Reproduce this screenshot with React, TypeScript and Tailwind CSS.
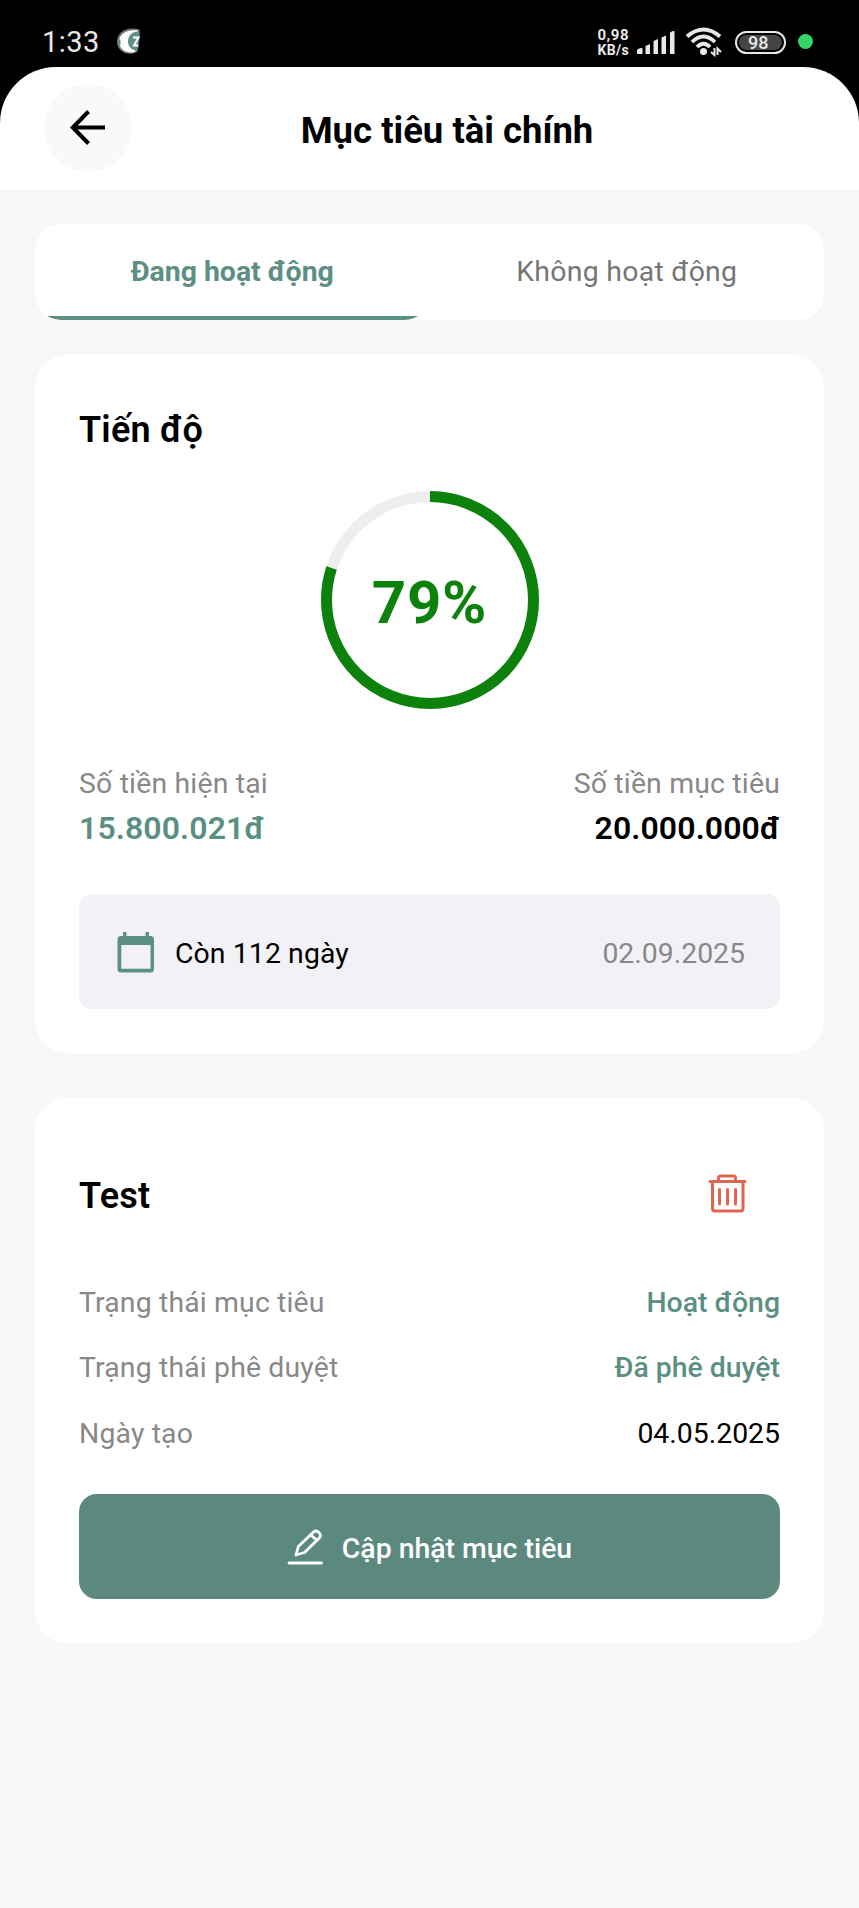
import type { ReactNode } from 'react';

function StatusBar() {
  return (
    <div className="flex h-[67px] items-center justify-between bg-black pt-[17px] pr-[46px] pl-[42px] text-[#e8e8e8]">
      <div className="flex items-center gap-[17px]">
        <span className="text-[29px] leading-[30px] tracking-[0.500px]">1:33</span>
        <svg className="-mt-[2px]" width="23" height="26" viewBox="0 0 23 26">
          <path d="M22.500 1.500C10 -2 0 4 0 13.500C0 23 10 29 20 24C22.500 19 22.500 7 22.500 1.500Z" fill="#77777a" />
          <path d="M21 2.500C10 1 2 6 2 13.500C2 21 9 26 18 24Z" fill="#fff" />
          <path d="M22.500 3.500C15 3 11 8 11 13.500C11 19 15 22.500 20 22C22.500 17 22.500 8 22.500 3.500Z" fill="#5f8e86" />
          <path d="M16 9.500H21.500L17 17.500H21" fill="none" stroke="#fff" strokeWidth="2" />
          <path d="M1 11L3.500 12V17L1.500 18Z" fill="#5f8e86" />
        </svg>
      </div>
      <div className="flex items-center">
        <div className="mr-[7px] flex flex-col pt-[2px] text-[15px] leading-[15px] font-bold">
          <span className="tracking-[0.500px]">0,98</span>
          <span className="text-[14px] tracking-[0.300px]">KB/s</span>
        </div>
        <svg width="40" height="26" viewBox="0 0 40 26" fill="#e8e8e8">
          <path d="M1 21Q1 20 5 19Q6.500 18.500 6.500 20V25H2Q1 25 1 24Z" />
          <path d="M9.500 17L14 15V25H9.500Z" />
          <path d="M17.500 12L22 10V25H17.500Z" />
          <path d="M25.500 8.500L30 6.500V25H25.500Z" />
          <path d="M34 4Q34 3 37 2Q38.500 1.500 38.500 3V25H34Z" />
        </svg>
        <svg className="ml-[9px]" width="38" height="30" viewBox="0 0 38 30" fill="none" stroke="#e8e8e8">
          <path d="M2 9.500Q18.500 -4.500 35 9.500" strokeWidth="4" />
          <path d="M7 15Q18.500 4 30 15" strokeWidth="3.800" />
          <path d="M12 20Q18.500 13.500 25 20" strokeWidth="3.800" />
          <circle cx="18.500" cy="24.500" r="3.500" fill="#e8e8e8" stroke="none" />
          <path d="M29.500 21V28L26 25M32.500 28V21.500L36 25" strokeWidth="2" />
        </svg>
        <div className="ml-[12px] flex h-[23px] w-[51px] items-center rounded-full border-2 border-[#e8e8e8] p-[2px]">
          <div className="flex h-full w-full items-center rounded-full bg-[#454545] pl-[9px] text-[18px] leading-[15px] font-medium">
            98
          </div>
        </div>
        <div className="-mt-px ml-[12px] size-[15px] rounded-full bg-[#32d567]" />
      </div>
    </div>
  );
}

function Header() {
  return (
    <div className="bg-black">
      <header className="flex h-[122px] items-center rounded-t-[56px] bg-white pr-[97px] pl-[44px]">
        <button className="-mt-px flex size-[88px] shrink-0 items-center justify-center rounded-full bg-[#f9f9f9] pr-[2px]">
          <svg width="35" height="35" viewBox="0 0 35 35" fill="none" stroke="#000" strokeWidth="4">
            <path d="M35 17.500H3M18.500 1.500L2.800 17.500L18.500 33.500" />
          </svg>
        </button>
        <h1 className="mt-[5px] flex-1 text-center text-[36.500px] leading-[44px] font-bold text-black">Mục tiêu tài chính</h1>
      </header>
    </div>
  );
}

function Tabs() {
  return (
    <div className="flex h-24 overflow-hidden rounded-[26px] bg-white text-[28.400px] leading-[36px]">
      <button className="flex flex-1 flex-col items-center overflow-hidden rounded-[26px] font-bold text-[#5c8f83]">
        <span className="flex flex-1 items-center pt-[4px]">Đang hoạt động</span>
        <span className="h-1 w-full shrink-0 bg-[#5c8f83]" />
      </button>
      <button className="flex flex-1 items-center justify-center tracking-[0.300px] text-[#757575]">Không hoạt động</button>
    </div>
  );
}

function ProgressRing({ value, arc }: { value: number; arc: number }) {
  return (
    <div className="grid size-[218px] place-items-center self-center">
      <svg className="col-start-1 row-start-1" width="218" height="218" viewBox="0 0 218 218" fill="none" strokeWidth="11">
        <circle cx="109" cy="109" r="103.500" stroke="#eeeeee" />
        <circle
          cx="109"
          cy="109"
          r="103.500"
          stroke="#0c820c"
          pathLength="100"
          strokeDasharray={`${arc} 100`}
          transform="rotate(-90 109 109)"
        />
      </svg>
      <span className="col-start-1 row-start-1 pt-[6px] text-[60px] leading-[70px] font-bold tracking-[0.700px] text-[#0c820c]">
        {value}%
      </span>
    </div>
  );
}

function Row({ label, children }: { label: string; children: ReactNode }) {
  return (
    <div className="flex h-[65.300px] items-center justify-between">
      <span className="tracking-[0.150px] text-[#888888]">{label}</span>
      {children}
    </div>
  );
}

export default function App() {
  return (
    <div className="min-h-[1908px] w-[859px] bg-[#f8f8f8] font-['Roboto',sans-serif]">
      <StatusBar />
      <Header />
      <main className="flex flex-col px-[35px] pt-[35px] text-[28.400px] leading-[36px] text-black">
        <Tabs />

        <section className="mt-[35px] flex h-[698px] flex-col rounded-[32px] bg-white px-[44px] pt-[53px]">
          <h2 className="text-[36px] leading-[44px] font-semibold tracking-[0.200px]">Tiến độ</h2>
          <div className="mt-[39px] flex flex-col">
            <ProgressRing value={79} arc={80} />
          </div>
          <div className="mt-[57px] flex justify-between">
            <div>
              <p className="tracking-[0.180px] text-[#888888]">Số tiền hiện tại</p>
              <p className="mt-[6px] text-[32px] leading-[40px] font-semibold tracking-[0.100px] text-[#5c8f83]">15.800.021đ</p>
            </div>
            <div className="text-right">
              <p className="tracking-[0.180px] text-[#888888]">Số tiền mục tiêu</p>
              <p className="mt-[6px] text-[32px] leading-[40px] font-semibold tracking-[0.100px]">20.000.000đ</p>
            </div>
          </div>
          <div className="mt-[46px] flex h-[115px] items-center rounded-[13px] bg-[#f2f2f6] pr-[35px] pl-[38px]">
            <svg className="mt-[2px]" width="38" height="41" viewBox="0 0 38 41" fill="#5c8f83">
              <path
                fillRule="evenodd"
                d="M6 0H9.500V4H28.500V0H32V4H33.500Q37 4 37 7.500V37Q37 40.500 33.500 40.500H4Q.5 40.500 .5 37V7.500Q.5 4 4 4H6ZM4.300 13V36.700H33.500V13Z"
              />
            </svg>
            <span className="ml-[20px] pt-[5px] tracking-[0.100px]">Còn 112 ngày</span>
            <span className="ml-auto pt-[5px] text-[#888888]">02.09.2025</span>
          </div>
        </section>

        <section className="mt-[45px] flex h-[545px] flex-col rounded-[32px] bg-white px-[44px] pt-[52px]">
          <div className="flex h-[88px] items-center justify-between pr-[33px]">
            <h2 className="pt-[4px] text-[36px] leading-[44px] font-semibold tracking-[0.200px]">Test</h2>
            <svg className="-mt-[2px]" width="39" height="39" viewBox="0 0 39 39" fill="none" stroke="#df6552" strokeWidth="3" strokeLinecap="round" strokeLinejoin="round">
              <path d="M2 7.500H37M10.500 7V4Q10.500 2 12.500 2H25.500Q27.500 2 27.500 4V7M4.500 8V34.500Q4.500 37 7 37H32.500Q35 37 35 34.500V8" />
              <path d="M11.500 15.500V30M19.500 15.500V30M27.500 15.500V30" />
            </svg>
          </div>
          <div className="mt-[32.500px] flex flex-col">
            <Row label="Trạng thái mục tiêu">
              <span className="font-medium text-[#5c8f83]">Hoạt động</span>
            </Row>
            <Row label="Trạng thái phê duyệt">
              <span className="font-medium text-[#5c8f83]">Đã phê duyệt</span>
            </Row>
            <Row label="Ngày tạo">
              <span>04.05.2025</span>
            </Row>
          </div>
          <button className="mt-[28px] flex h-[105px] items-center justify-center rounded-[18px] bg-[#5b897d] text-white">
            <svg width="36" height="36" viewBox="0 0 36 36" fill="none" stroke="#fff" strokeWidth="2.800" strokeLinecap="round" strokeLinejoin="round">
              <path d="M9 26L11.300 17.500L26.500 3Q29 .8 31.700 3.300Q34.800 6.200 32.500 8.800L17.500 23.500Z" />
              <path d="M24 6L30 11.500" />
              <path d="M2 34H34.500" />
            </svg>
            <span className="ml-[19px] pt-[4px] font-medium">Cập nhật mục tiêu</span>
          </button>
        </section>
      </main>
    </div>
  );
}
